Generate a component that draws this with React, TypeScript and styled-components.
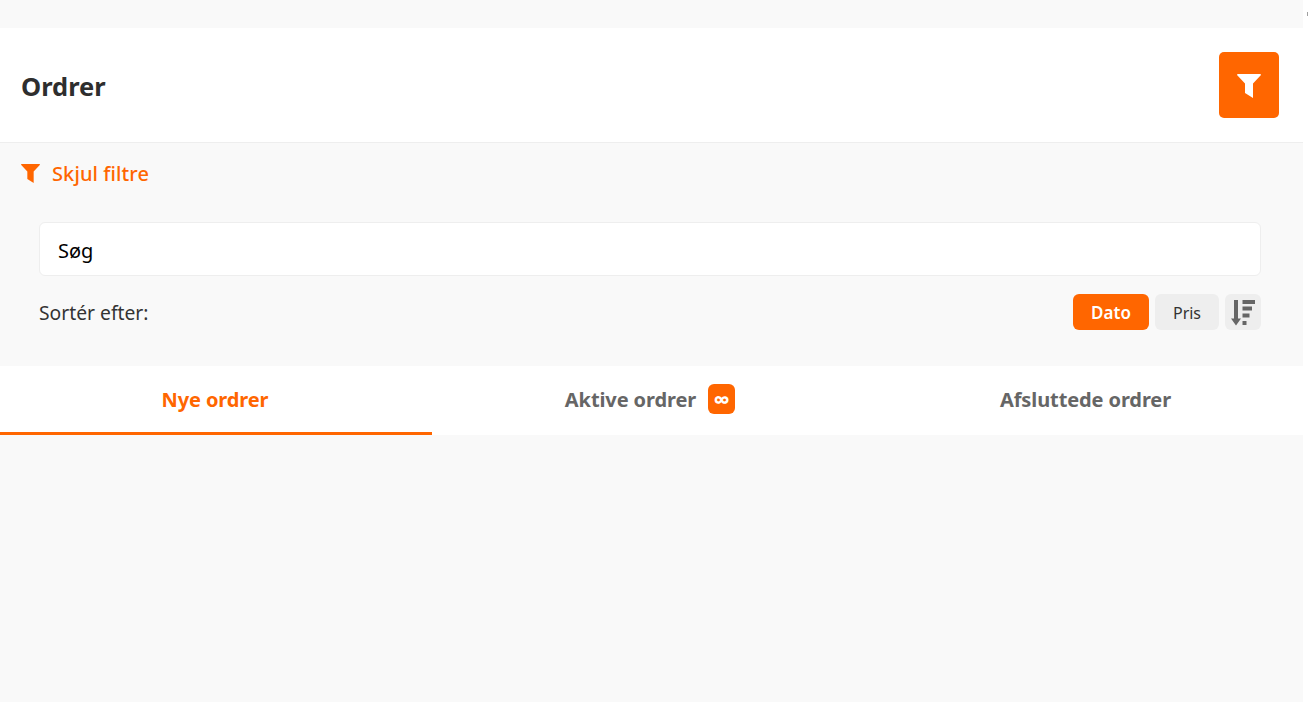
import React from "react";
import styled, { createGlobalStyle } from "styled-components";

const orange = "#ff6600";

const GlobalStyle = createGlobalStyle`
  html, body {
    margin: 0;
    padding: 0;
    height: 100%;
    background: #ffffff;
    overflow: hidden;
  }
  #root {
    height: 100%;
  }
`;

const Shell = styled.div`
  display: flex;
  height: 702px;
`;

const Page = styled.div`
  width: 1303px;
  flex: none;
  padding-top: 28px;
  box-sizing: border-box;
  background: #f9f9f9;
  font-family: "Noto Sans", "Open Sans", sans-serif;
  color: #333333;
`;

const ScrollRail = styled.div`
  flex: 1;
  display: flex;
  justify-content: flex-end;
  padding-top: 12px;
  align-items: flex-start;
`;

const ScrollMark = styled.span`
  width: 1px;
  height: 4px;
  background: #a0a0a0;
`;

const Header = styled.header`
  height: 115px;
  box-sizing: border-box;
  background: #ffffff;
  border-bottom: 1px solid #eeeeee;
  display: flex;
  align-items: center;
  justify-content: space-between;
  padding: 0 24px 0 21px;
`;

const Title = styled.h1`
  margin: 0;
  padding-top: 1px;
  font-size: 25.5px;
  font-weight: 700;
  color: #2e2e2e;
`;

const FilterButton = styled.button`
  width: 60px;
  height: 66px;
  border: none;
  border-radius: 5px;
  background: ${orange};
  color: #ffffff;
  display: flex;
  align-items: center;
  justify-content: center;
  padding: 2px 0 0;
`;

const FilterToggle = styled.button`
  display: flex;
  align-items: center;
  gap: 12px;
  height: 60px;
  padding: 0 0 0 21px;
  border: none;
  background: none;
  color: ${orange};
  font-family: inherit;
  font-size: 20px;
  font-weight: 500;
  letter-spacing: 0.1px;
`;

const Filters = styled.section`
  padding: 19px 42px 36px 39px;
  display: flex;
  flex-direction: column;
  gap: 18px;
`;

const SearchInput = styled.input`
  height: 54px;
  box-sizing: border-box;
  border: 1px solid #eeeeee;
  border-radius: 6px;
  background: #ffffff;
  padding: 2px 18px 0;
  font-family: inherit;
  font-size: 20px;
  color: #000000;
  &::placeholder {
    color: #000000;
    opacity: 1;
  }
`;

const SortRow = styled.div`
  display: flex;
  align-items: center;
  justify-content: space-between;
  height: 36px;
`;

const SortLabel = styled.span`
  padding-top: 1px;
  font-size: 19.3px;
  color: #333333;
`;

const SortButtons = styled.div`
  display: flex;
  gap: 6px;
`;

const SortButton = styled.button<{ $active?: boolean; $width: number }>`
  width: ${(p) => p.$width}px;
  height: 36px;
  border: none;
  border-radius: 6px;
  padding: 1px 0 0;
  display: flex;
  align-items: center;
  justify-content: center;
  font-family: inherit;
  font-size: ${(p) => (p.$active ? 17 : 16)}px;
  font-weight: ${(p) => (p.$active ? 600 : 400)};
  background: ${(p) => (p.$active ? orange : "#eeeeee")};
  color: ${(p) => (p.$active ? "#ffffff" : "#333333")};
`;

const SortIconButton = styled.button`
  width: 36px;
  height: 36px;
  border: none;
  border-radius: 6px;
  padding: 0;
  display: flex;
  background: #eeeeee;
  color: #666666;
`;

const Tabs = styled.nav`
  display: grid;
  grid-template-columns: 432px 436px 1fr;
  height: 69px;
  background: #ffffff;
`;

const Tab = styled.div<{ $active?: boolean }>`
  display: flex;
  align-items: center;
  justify-content: center;
  gap: 12px;
  box-sizing: border-box;
  padding: 1px ${(p) => (p.$active ? 2 : 0)}px 0 0;
  font-size: 20px;
  font-weight: 700;
  letter-spacing: -0.1px;
  color: ${(p) => (p.$active ? orange : "#666666")};
  border-bottom: 3px solid ${(p) => (p.$active ? orange : "transparent")};
`;

const Badge = styled.span`
  width: 27px;
  height: 30px;
  margin-top: -2px;
  border-radius: 6px;
  background: ${orange};
  color: #ffffff;
  font-size: 23px;
  font-weight: 700;
  letter-spacing: 0;
  display: flex;
  align-items: center;
  justify-content: center;
`;

function FunnelIcon({ size }: { size: number }) {
  return (
    <svg width={size} height={size} viewBox="0 0 24 24" fill="currentColor">
      <path d="M0.5 0H23.5L24 1L16 9.5V24L8 19V9.5L0 1Z" />
    </svg>
  );
}

function SortDownIcon() {
  return (
    <svg width="36" height="36" viewBox="0 0 36 36" fill="currentColor">
      <path d="M9 6H13V24.5H16L11 31.5L6 24.5H9Z" />
      <path d="M17.5 6H30V10H17.5ZM17.5 12.5H27V16.5H17.5ZM17.5 19.5H24.5V23.5H17.5ZM17.5 27H21.5V31H17.5Z" />
    </svg>
  );
}

export default function App() {
  return (
    <Shell>
      <GlobalStyle />
      <Page>
        <Header>
          <Title>Ordrer</Title>
          <FilterButton aria-label="Filtre">
            <FunnelIcon size={24} />
          </FilterButton>
        </Header>
        <FilterToggle>
          <FunnelIcon size={19} />
          Skjul filtre
        </FilterToggle>
        <Filters>
          <SearchInput placeholder="Søg" />
          <SortRow>
            <SortLabel>Sortér efter:</SortLabel>
            <SortButtons>
              <SortButton $active $width={76}>
                Dato
              </SortButton>
              <SortButton $width={64}>Pris</SortButton>
              <SortIconButton aria-label="Sortering">
                <SortDownIcon />
              </SortIconButton>
            </SortButtons>
          </SortRow>
        </Filters>
        <Tabs>
          <Tab $active>Nye ordrer</Tab>
          <Tab>
            Aktive ordrer
            <Badge>∞</Badge>
          </Tab>
          <Tab>Afsluttede ordrer</Tab>
        </Tabs>
      </Page>
      <ScrollRail>
        <ScrollMark />
      </ScrollRail>
    </Shell>
  );
}
